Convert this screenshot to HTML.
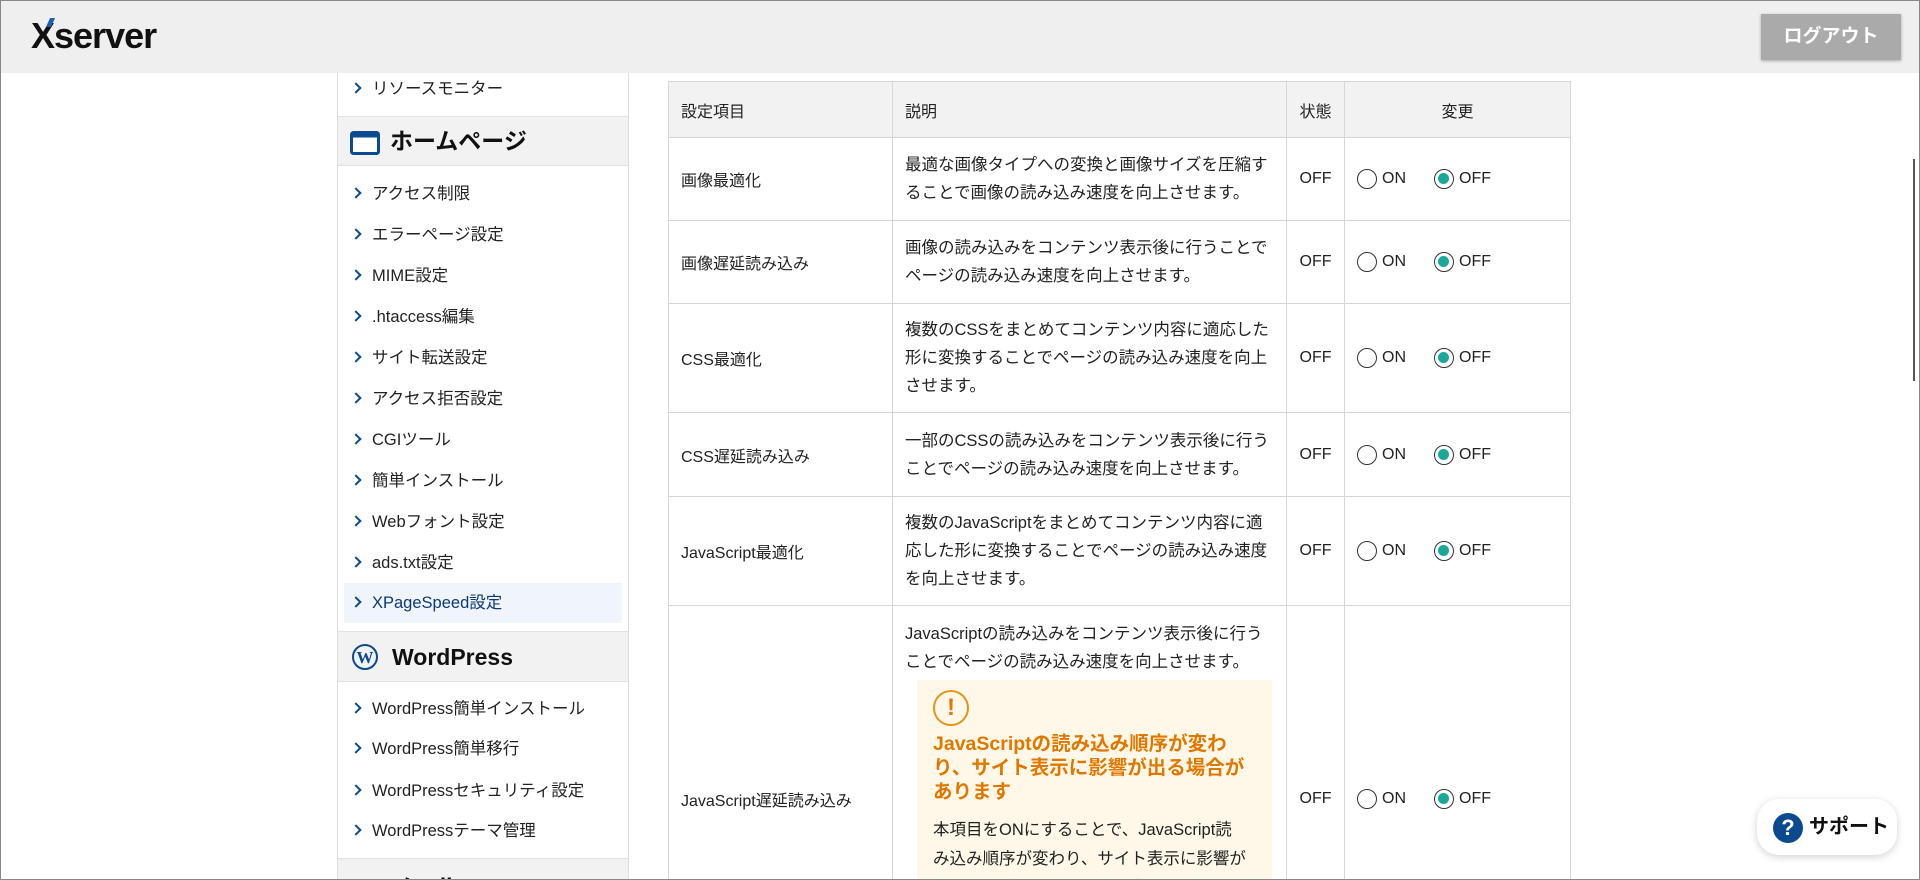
<!DOCTYPE html>
<html><head><meta charset="utf-8"><style>
*{margin:0;padding:0;box-sizing:border-box}
html,body{width:1920px;height:880px;overflow:hidden;background:#fff}
body{font-family:"Liberation Sans","Noto Sans CJK JP",sans-serif;color:#222;position:relative}
.wrap{position:absolute;left:0;top:0;width:1920px;height:880px;overflow:hidden;border:1px solid #888}
.hdr{position:absolute;left:0;top:0;width:1920px;height:72px;background:#efefef}
.logo{position:absolute;left:30px;top:14px;font-size:36px;font-weight:bold;color:#111;letter-spacing:-1px}
.logo .mk{position:absolute;left:17px;top:3px;width:5px;height:9px;background:#1a5fb4;transform:skewX(-25deg)}
.lo{position:absolute;left:1760px;top:13px;width:140px;height:46px;background:#aaa;color:#fff;font-size:19px;font-weight:bold;text-align:center;line-height:46px;box-shadow:0 1px 3px rgba(0,0,0,.3)}
.side{position:absolute;left:336px;top:72px;width:292px;height:808px;border-left:1px solid #ddd;border-right:1px solid #ddd}
.it{position:absolute;left:14px;font-size:16.5px;line-height:20px;color:#222;white-space:nowrap}
.it:before{content:"";display:inline-block;width:6px;height:6px;border-right:2.5px solid #0b4a8f;border-top:2.5px solid #0b4a8f;transform:rotate(45deg);margin:0 12px 2px 0}
.sec{position:absolute;left:0;width:290px;background:#f2f2f2;border-top:1px solid #e2e2e2;border-bottom:1px solid #e2e2e2;font-size:23px;font-weight:bold;color:#111}
.sel{position:absolute;left:6px;top:510px;width:278px;height:40px;background:#f0f5fb}
table{position:absolute;left:667px;top:80px;width:903px;border-collapse:collapse;font-size:16px}
td,th{border:1px solid #d6d6d6;padding:0 12px;font-weight:normal;text-align:left;vertical-align:middle}
th{background:#f2f2f2;height:56px}
.d{line-height:28px;font-size:16.5px}
.r{display:inline-block;width:20px;height:20px;border:1.5px solid #333;border-radius:50%;vertical-align:middle;margin-right:5px;position:relative}
.r.on:after{content:"";position:absolute;left:3px;top:3px;width:11px;height:11px;border-radius:50%;background:#1aa89a}
.ch span.g{margin-right:28px}
.warn{background:#fff8e8;margin:4px 0 0 12px;padding:10px 24px 60px 16px;width:355px}
.wt{color:#e07800;font-weight:bold;font-size:19.5px;line-height:24px;margin:6px 0 12px}
.ic{width:36px;height:36px;border:2px solid #e8921a;border-radius:50%;color:#e07800;font-weight:bold;font-size:24px;text-align:center;line-height:32px}
.sup{position:absolute;left:1756px;top:798px;width:140px;height:56px;background:#fff;border-radius:22px;box-shadow:0 2px 8px rgba(0,0,0,.18);font-size:20px;font-weight:bold;line-height:56px;padding-left:52px;color:#111;white-space:nowrap}
.sup i{position:absolute;left:16px;top:14px;width:30px;height:30px;border-radius:50%;background:#0b4a8f;color:#fff;font-style:normal;font-size:22px;line-height:30px;text-align:center}
.sb{position:absolute;left:1912px;top:158px;width:2px;height:222px;background:#555}
</style></head><body><div class="wrap">
<div class="hdr"><div class="logo"><span class="mk"></span>Xserver</div><div class="lo">ログアウト</div></div>
<div class="side">
<div class="it" style="top:6px">リソースモニター</div>
<div class="sec" style="top:43px;height:50px;line-height:48px;padding-left:52px"><svg style="position:absolute;left:12px;top:14px" width="30" height="24"><rect x="1.5" y="1.5" width="27" height="21" rx="2" fill="#fff" stroke="#0b4a8f" stroke-width="3"/><rect x="1.5" y="1.5" width="27" height="5" fill="#0b4a8f"/></svg>ホームページ</div>
<div class="it" style="top:111px">アクセス制限</div>
<div class="it" style="top:152px">エラーページ設定</div>
<div class="it" style="top:193px">MIME設定</div>
<div class="it" style="top:234px">.htaccess編集</div>
<div class="it" style="top:275px">サイト転送設定</div>
<div class="it" style="top:316px">アクセス拒否設定</div>
<div class="it" style="top:357px">CGIツール</div>
<div class="it" style="top:398px">簡単インストール</div>
<div class="it" style="top:439px">Webフォント設定</div>
<div class="it" style="top:480px">ads.txt設定</div>
<div class="sel"></div>
<div class="it" style="top:520px;color:#0b3a75">XPageSpeed設定</div>
<div class="sec" style="top:558px;height:51px;line-height:50px;padding-left:54px;font-family:'Liberation Sans',sans-serif"><svg style="position:absolute;left:14px;top:12px" width="26" height="26" viewBox="0 0 26 26"><circle cx="13" cy="13" r="12" fill="none" stroke="#0b4a8f" stroke-width="2"/><text x="13" y="19" font-family="Liberation Serif" font-weight="bold" font-size="17" text-anchor="middle" fill="#0b4a8f">W</text></svg>WordPress</div>
<div class="it" style="top:626px">WordPress簡単インストール</div>
<div class="it" style="top:666px">WordPress簡単移行</div>
<div class="it" style="top:708px">WordPressセキュリティ設定</div>
<div class="it" style="top:748px">WordPressテーマ管理</div>
<div class="sec" style="top:785px;height:40px;padding-left:52px;line-height:56px"><svg style="position:absolute;left:12px;top:20px" width="30" height="24"><rect x="1.5" y="1.5" width="27" height="21" rx="2" fill="#fff" stroke="#0b4a8f" stroke-width="3"/></svg>メール</div>
</div>
<table>
<tr><th style="width:224px">設定項目</th><th style="width:394px">説明</th><th style="width:58px;text-align:center;padding:0">状態</th><th style="text-align:center">変更</th></tr>
<tr style="height:83px"><td>画像最適化</td><td class="d">最適な画像タイプへの変換と画像サイズを圧縮することで画像の読み込み速度を向上させます。</td><td style="text-align:center;padding:0">OFF</td><td class="ch"><span class="r"></span><span class="g">ON</span><span class="r on"></span>OFF</td></tr>
<tr style="height:83px"><td>画像遅延読み込み</td><td class="d">画像の読み込みをコンテンツ表示後に行うことでページの読み込み速度を向上させます。</td><td style="text-align:center;padding:0">OFF</td><td class="ch"><span class="r"></span><span class="g">ON</span><span class="r on"></span>OFF</td></tr>
<tr style="height:109px"><td>CSS最適化</td><td class="d">複数のCSSをまとめてコンテンツ内容に適応した形に変換することでページの読み込み速度を向上させます。</td><td style="text-align:center;padding:0">OFF</td><td class="ch"><span class="r"></span><span class="g">ON</span><span class="r on"></span>OFF</td></tr>
<tr style="height:84px"><td>CSS遅延読み込み</td><td class="d">一部のCSSの読み込みをコンテンツ表示後に行うことでページの読み込み速度を向上させます。</td><td style="text-align:center;padding:0">OFF</td><td class="ch"><span class="r"></span><span class="g">ON</span><span class="r on"></span>OFF</td></tr>
<tr style="height:109px"><td>JavaScript最適化</td><td class="d">複数のJavaScriptをまとめてコンテンツ内容に適応した形に変換することでページの読み込み速度を向上させます。</td><td style="text-align:center;padding:0">OFF</td><td class="ch"><span class="r"></span><span class="g">ON</span><span class="r on"></span>OFF</td></tr>
<tr><td>JavaScript遅延読み込み</td><td class="d" style="padding-top:14px;vertical-align:top">JavaScriptの読み込みをコンテンツ表示後に行うことでページの読み込み速度を向上させます。
<div class="warn"><div class="ic">!</div><div class="wt">JavaScriptの読み込み順序が変わり、サイト表示に影響が出る場合があります</div><div style="line-height:29px">本項目をONにすることで、JavaScript読み込み順序が変わり、サイト表示に影響が出る場合があります。設定変更後、サイトの表示を確認してください。</div></div></td><td style="text-align:center;padding:0">OFF</td><td class="ch"><span class="r"></span><span class="g">ON</span><span class="r on"></span>OFF</td></tr>
</table>
<div class="sb"></div>
<div class="sup"><i>?</i>サポート</div>
</div></body></html>
